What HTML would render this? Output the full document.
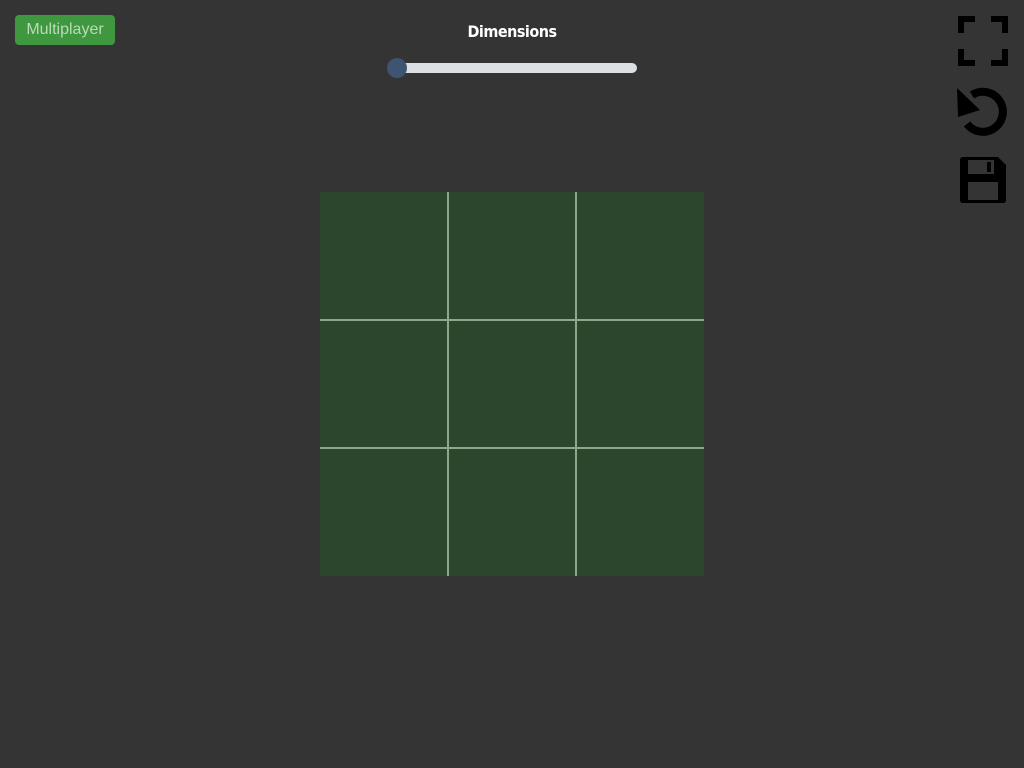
<!DOCTYPE html>
<html><head><style>
body{margin:0;width:1024px;height:768px;background:#343434;position:relative;overflow:hidden;font-family:"Liberation Sans",sans-serif}
.btn{position:absolute;left:15px;top:15px;width:100px;height:30px;background:#3f973f;border-radius:4px;color:#b8dcb8;font-size:16px;line-height:30px;text-align:center}
.title{position:absolute;left:412px;width:200px;top:22px;text-align:center;color:#fff;font-weight:bold;font-size:16px;letter-spacing:-0.5px;font-family:"Comic Sans MS","DejaVu Sans Condensed","DejaVu Sans",sans-serif}
.track{position:absolute;left:390px;top:63px;width:247px;height:10px;background:#dde0e3;border-radius:5px}
.thumb{position:absolute;left:387px;top:58px;width:20px;height:20px;background:#3f5470;border-radius:50%}
.grid{position:absolute;left:320px;top:192px;width:384px;height:384px;background:#2b462c}
.v,.h{position:absolute;background:#8aa98b}
.v{width:2px;height:384px;top:0}.h{height:2px;width:384px;left:0}
</style></head><body>
<div class="btn">Multiplayer</div>
<div class="title">Dimensions</div>
<div class="track"></div><div class="thumb"></div>
<div class="grid"><div class="v" style="left:127px"></div><div class="v" style="left:255px"></div><div class="h" style="top:127px"></div><div class="h" style="top:255px"></div></div>
<svg style="position:absolute;left:0;top:0" width="1024" height="768">
<g fill="none" stroke="#000" stroke-width="6">
<path d="M961 33V19H975M991 19H1005V33M1005 49V63H991M975 63H961V49"/>
<path d="M972 95A20 20 0 1 1 967 124" stroke-width="8"/>
</g>
<path d="M957 88L980 110L958 117Z" fill="#000"/>
<path d="M963 157H998L1006 165V200Q1006 203 1003 203H963Q960 203 960 200V160Q960 157 963 157Z" fill="#000"/>
<rect x="968" y="160" width="26" height="14" fill="#343434"/>
<rect x="987" y="162" width="4" height="10" fill="#000"/>
<rect x="968" y="182" width="30" height="18" fill="#343434"/>
</svg>
</body></html>
